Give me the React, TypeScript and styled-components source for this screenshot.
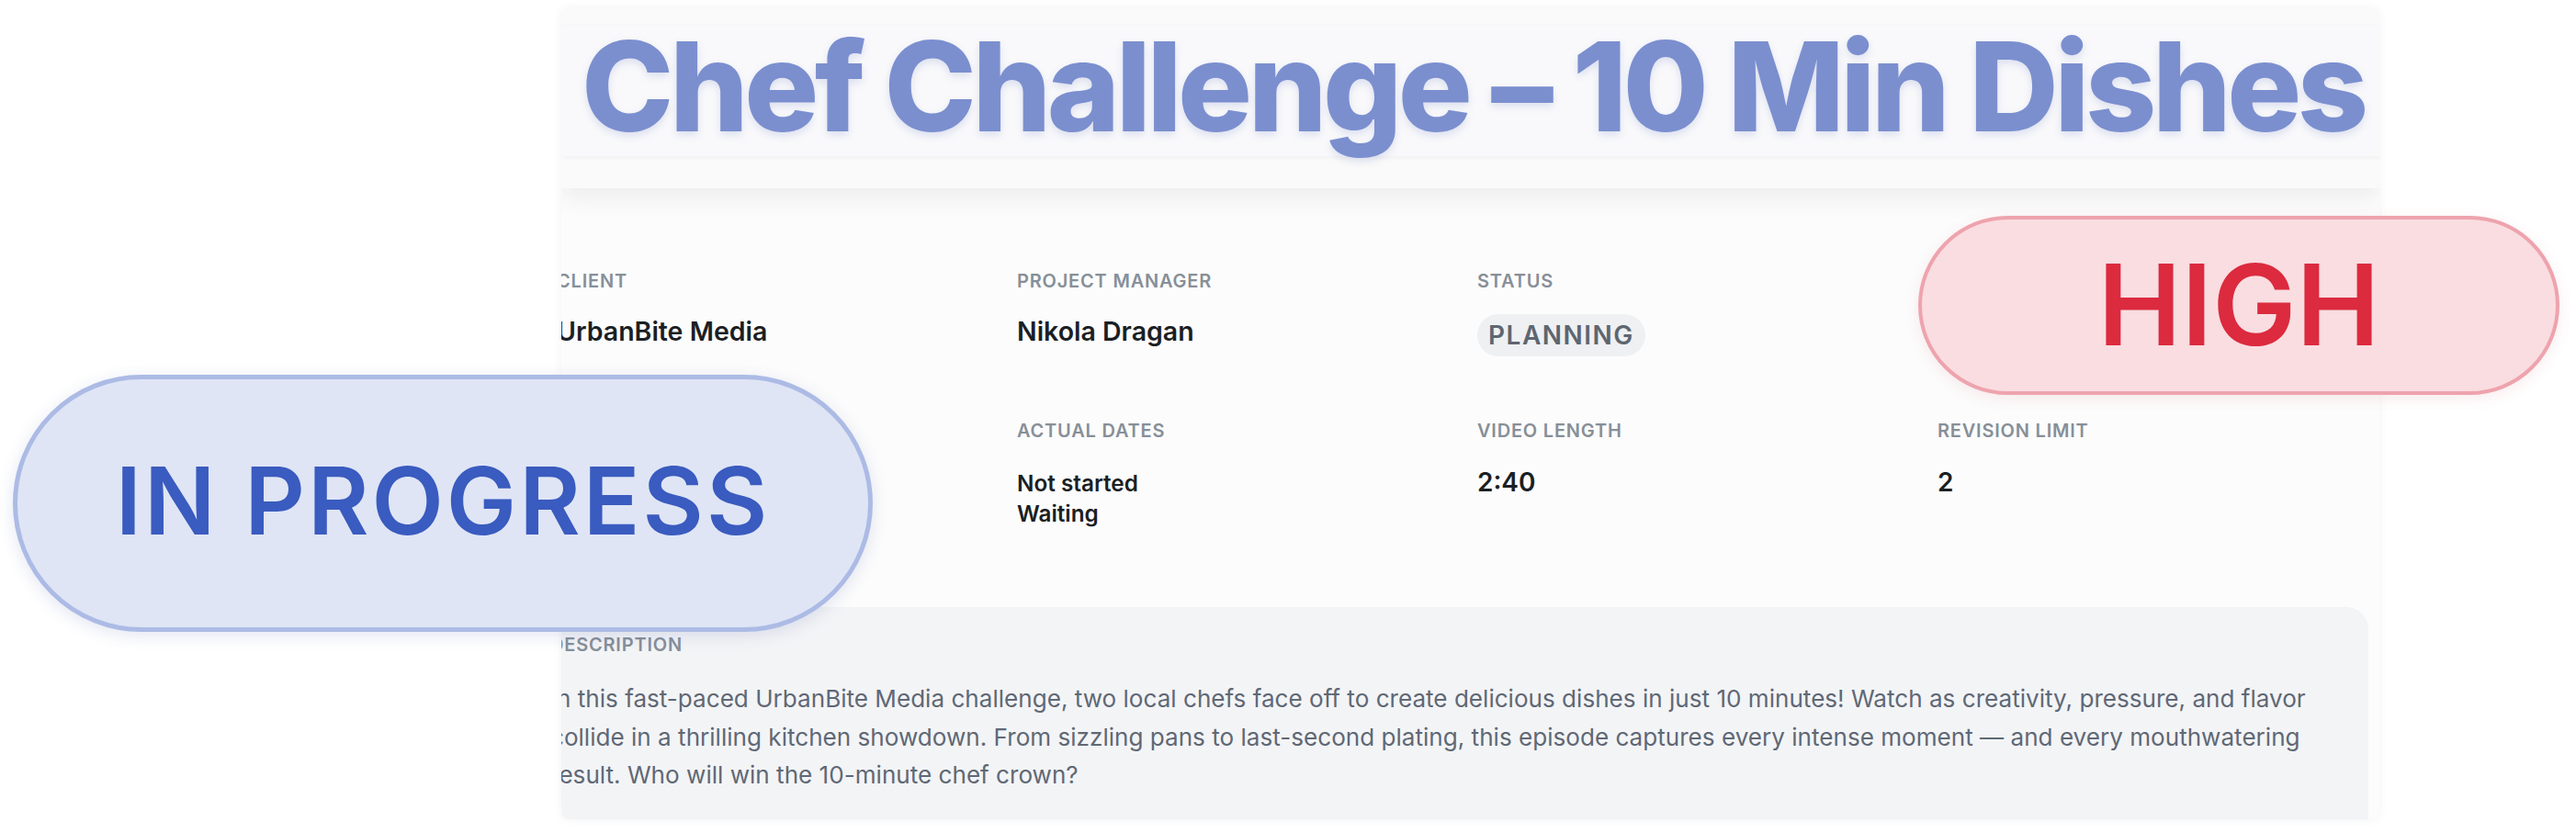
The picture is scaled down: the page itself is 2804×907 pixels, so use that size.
import React from "react";
import styled, { createGlobalStyle } from "styled-components";

const GlobalStyle = createGlobalStyle`
  html, body {
    margin: 0;
    padding: 0;
    background: #ffffff;
  }
  body {
    font-family: Inter, "Noto Sans", "Liberation Sans", sans-serif;
    width: 2804px;
    height: 907px;
    overflow: hidden;
    -webkit-font-smoothing: antialiased;
  }
  * { box-sizing: border-box; }
`;

const Stage = styled.div`
  position: relative;
  width: 2804px;
  height: 907px;
  padding: 9px 0 0 611px;
`;

const Card = styled.section`
  width: 1979px;
  height: 883px;
  overflow: hidden;
  border-radius: 8px;
  background: #fbfbfc;
  box-shadow: 0 0 12px rgba(0, 0, 0, 0.05);
  display: flex;
  flex-direction: column;
`;

const Header = styled.header`
  position: relative;
  z-index: 1;
  height: 196px;
  flex: none;
  padding-top: 19px;
  background: #fafafa;
  box-shadow: 0 10px 26px rgba(0, 0, 0, 0.065);
`;

const TitleBox = styled.div`
  height: 142px;
  display: flex;
  align-items: center;
  padding: 0 0 10px 22px;
  background: #f9f9fb;
  box-shadow: 0 1px 6px rgba(0, 0, 0, 0.05);
`;

const Title = styled.h1`
  margin: 0;
  font-family: Inter, "Noto Sans", sans-serif;
  font-size: 135px;
  line-height: 135px;
  font-weight: 800;
  letter-spacing: -4.5px;
  color: #7b8fcf;
  white-space: nowrap;
  text-shadow: 0 4px 8px rgba(90, 110, 190, 0.18);
`;

const Body = styled.div`
  flex: 1;
  margin-left: -43px;
  padding: 89px 12px 0 0;
  background: #fcfcfc;
`;

const Grid = styled.div`
  margin-left: 38px;
  display: grid;
  grid-template-columns: repeat(4, 469px);
  column-gap: 32px;
  row-gap: 69px;
`;

const Field = styled.div`
  display: flex;
  flex-direction: column;
  align-items: flex-start;
`;

const Label = styled.div<{ $gap?: number }>`
  font-size: 20px;
  line-height: 24px;
  font-weight: 600;
  letter-spacing: 0.8px;
  text-transform: uppercase;
  color: #878f98;
  margin-bottom: ${(p) => p.$gap ?? 24}px;
  white-space: nowrap;
`;

const Value = styled.div<{ $size?: number; $lh?: number }>`
  font-size: ${(p) => p.$size ?? 28.5}px;
  line-height: ${(p) => p.$lh ?? 38}px;
  font-weight: 600;
  color: #1b1f24;
  white-space: nowrap;
`;

const DateStack = styled.div`
  margin-top: 5px;
  display: flex;
  flex-direction: column;
  font-size: 24.3px;
  line-height: 33px;
  font-weight: 600;
  color: #1b1f24;
`;

const StatusPill = styled.span`
  display: inline-flex;
  align-items: center;
  height: 46px;
  padding: 0 12px;
  border-radius: 23px;
  background: #eef0f2;
  color: #5e6670;
  font-size: 28px;
  line-height: 46px;
  font-weight: 600;
  letter-spacing: 1.5px;
`;

const DescBox = styled.div`
  margin-top: 85px;
  height: 300px;
  padding: 29px 32px 40px 31px;
  background: #f3f4f6;
  border-radius: 24px;
`;

const DescText = styled.p`
  margin: 0;
  font-size: 26.1px;
  line-height: 41.5px;
  font-weight: 400;
  color: #5f6875;
`;

const Pill = styled.div<{ $tone: "blue" | "red" }>`
  position: absolute;
  display: flex;
  align-items: center;
  justify-content: center;
  border-radius: 999px;
  font-family: Inter, "Noto Sans", sans-serif;
  font-weight: 600;
  white-space: nowrap;
  filter: blur(0.7px);
  background: ${(p) => (p.$tone === "blue" ? "#dfe5f5" : "#f9dde1")};
  border: ${(p) => (p.$tone === "blue" ? "5px solid #acbbe5" : "4px solid #eea3ad")};
  color: ${(p) => (p.$tone === "blue" ? "#3a5bbf" : "#dc2a3e")};
  box-shadow: ${(p) =>
    p.$tone === "blue"
      ? "0 4px 18px rgba(60, 80, 160, 0.14)"
      : "0 4px 16px rgba(200, 60, 80, 0.10)"};
`;

const ProgressPill = styled(Pill)`
  left: 14px;
  top: 408px;
  width: 936px;
  height: 280px;
  font-size: 102px;
  letter-spacing: 3px;
  padding-bottom: 6px;
`;

const PriorityPill = styled(Pill)`
  left: 2088px;
  top: 235px;
  width: 698px;
  height: 195px;
  font-size: 122px;
  letter-spacing: 0px;
  padding-bottom: 2px;
`;

export default function App() {
  return (
    <>
      <GlobalStyle />
      <Stage>
        <Card>
          <Header>
            <TitleBox>
              <Title>Chef Challenge – 10 Min Dishes</Title>
            </TitleBox>
          </Header>
          <Body>
            <Grid>
              <Field>
                <Label>Client</Label>
                <Value>UrbanBite Media</Value>
              </Field>
              <Field>
                <Label>Project Manager</Label>
                <Value>Nikola Dragan</Value>
              </Field>
              <Field>
                <Label>Status</Label>
                <StatusPill>PLANNING</StatusPill>
              </Field>
              <Field />
              <Field />
              <Field>
                <Label>Actual Dates</Label>
                <DateStack>
                  <span>Not started</span>
                  <span>Waiting</span>
                </DateStack>
              </Field>
              <Field>
                <Label>Video Length</Label>
                <Value $size={28} $lh={40}>2:40</Value>
              </Field>
              <Field>
                <Label>Revision Limit</Label>
                <Value $size={28} $lh={40}>2</Value>
              </Field>
            </Grid>
            <DescBox>
              <Label $gap={26}>Description</Label>
              <DescText>
                In this fast-paced UrbanBite Media challenge, two local chefs face off to create
                delicious dishes in just 10 minutes! Watch as creativity, pressure, and flavor
                collide in a thrilling kitchen showdown. From sizzling pans to last-second plating,
                this episode captures every intense moment — and every mouthwatering result. Who
                will win the 10-minute chef crown?
              </DescText>
            </DescBox>
          </Body>
        </Card>
        <ProgressPill $tone="blue">IN PROGRESS</ProgressPill>
        <PriorityPill $tone="red">HIGH</PriorityPill>
      </Stage>
    </>
  );
}
